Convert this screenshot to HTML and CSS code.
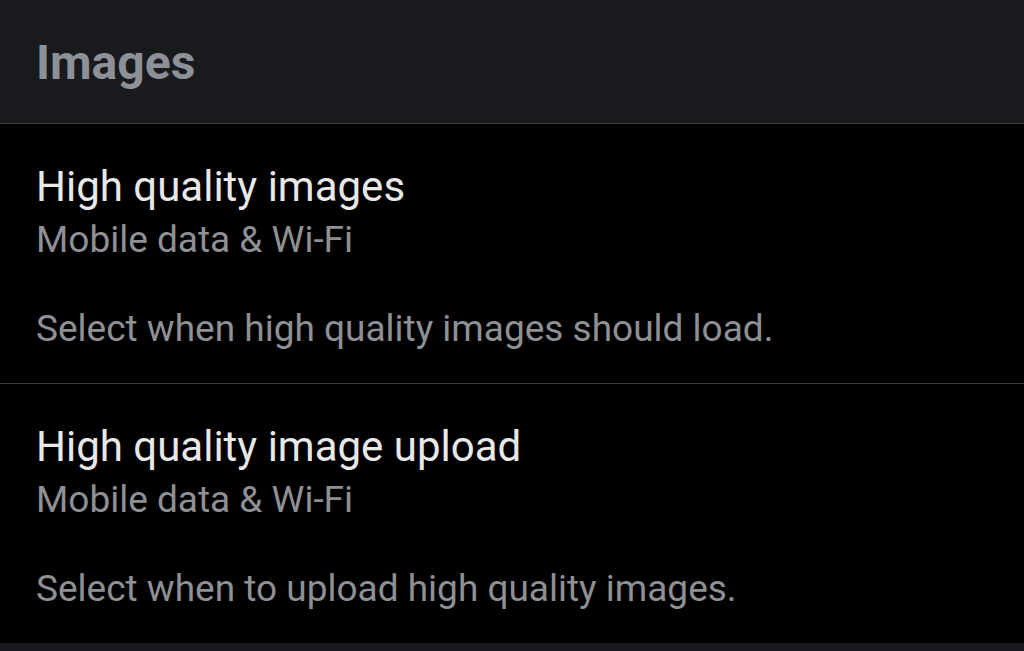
FILE: index.html
```html
<!DOCTYPE html>
<html lang="en">
<head>
    <meta charset="UTF-8">
    <meta name="viewport" content="width=device-width, initial-scale=1.0">
    <title>Images</title>
    <link rel="stylesheet" href="styles.css">
</head>
<body>
    <div id="settings">
        <div class="section-header">Images</div>

        <div class="pref">
            <div class="pref-title">High quality images</div>
            <div class="pref-value">Mobile data &amp; Wi-Fi</div>
            <div class="pref-summary">Select when high quality images should load.</div>
        </div>

        <div class="pref last">
            <div class="pref-title">High quality image upload</div>
            <div class="pref-value">Mobile data &amp; Wi-Fi</div>
            <div class="pref-summary">Select when to upload high quality images.</div>
        </div>

        <div class="section-header next"></div>
    </div>
</body>
</html>
```
FILE: styles.css
```css
body {
    font-family: Roboto, "Noto Sans", sans-serif;
    margin: 0;
    padding: 0;
    background-color: #000;
}

#settings {
    height: 651px;
    overflow: hidden;
}

.section-header {
    background-color: #181a1e;
    color: #8d9096;
    font-size: 48px;
    font-weight: 700;
    line-height: 56px;
    padding: 35px 36px 32px;
    border-bottom: 1px solid #3c3e42;
}

.section-header.next {
    background-color: #17181d;
    border-bottom: none;
    height: 100px;
}

.pref {
    height: 260px;
    box-sizing: border-box;
    padding: 38px 36px 0;
    border-bottom: 1px solid #3a3c40;
}

.pref.last {
    height: 259px;
    border-bottom: none;
}

.pref-title {
    color: #e8e8e8;
    font-size: 42px;
    line-height: 50px;
}

.pref-value {
    color: #8e9094;
    font-size: 37px;
    line-height: 56px;
}

.pref-summary {
    color: #8e9094;
    font-size: 37px;
    line-height: 56px;
    margin-top: 33px;
}
```
